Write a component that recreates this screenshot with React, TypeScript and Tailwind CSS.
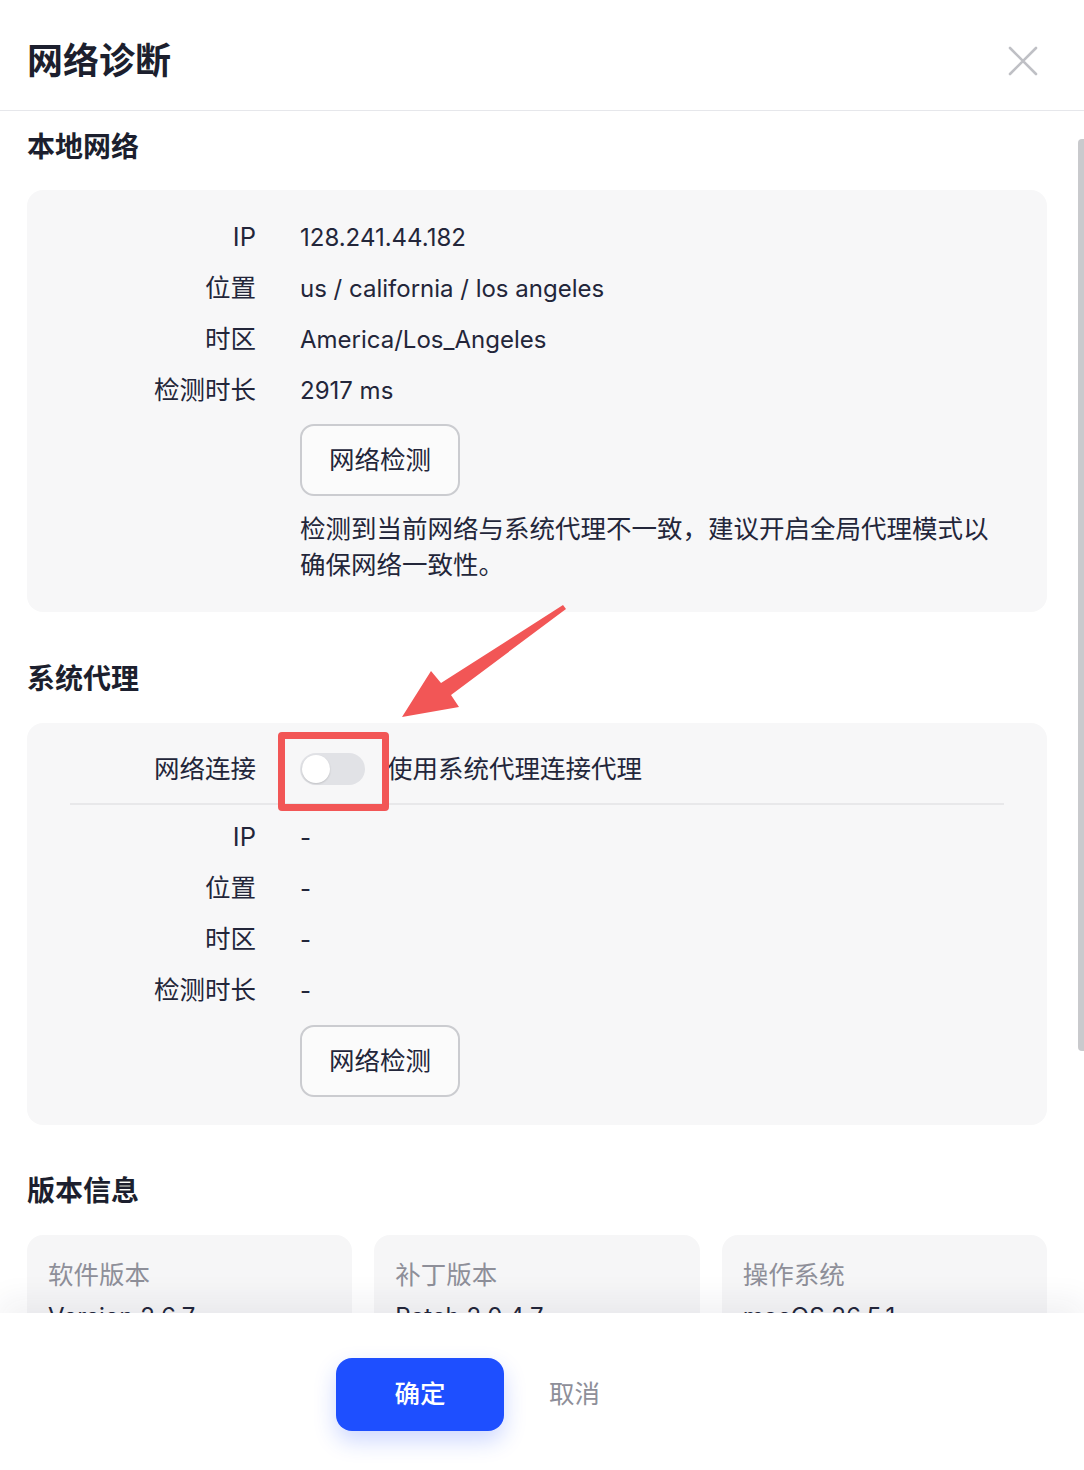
import React from 'react';

const rowsLocal = [
  { label: 'IP', value: '128.241.44.182' },
  { label: '位置', value: 'us / california / los angeles' },
  { label: '时区', value: 'America/Los_Angeles' },
  { label: '检测时长', value: '2917 ms' },
];

const rowsProxy = [
  { label: 'IP', value: '-' },
  { label: '位置', value: '-' },
  { label: '时区', value: '-' },
  { label: '检测时长', value: '-' },
];

const versions = [
  { label: '软件版本', value: 'Version 2.6.7' },
  { label: '补丁版本', value: 'Patch 2.0.4.7' },
  { label: '操作系统', value: 'macOS 26.5.1' },
];

function InfoRow({ label, value }: { label: string; value: string }) {
  return (
    <div className="flex h-[51px] items-center">
      <div className="w-[186px] text-right">{label}</div>
      <div className="ml-[44px] text-[24px]">{value}</div>
    </div>
  );
}

function CheckButton() {
  return (
    <button className="h-[72px] w-[160px] rounded-[14px] border-2 border-[#cbccd0] bg-[#fbfbfb] text-[25.5px] text-[#23263a]">
      网络检测
    </button>
  );
}

function SectionTitle({ children }: { children: React.ReactNode }) {
  return (
    <h2 className="flex h-[72px] items-center text-[28px] font-bold text-[#1c1f2e]">{children}</h2>
  );
}

export default function App() {
  return (
    <div className="relative flex h-[1470px] w-[1084px] flex-col overflow-hidden bg-white font-[Inter,'Noto_Sans_CJK_SC',sans-serif] text-[25.5px] text-[#23263a]">
      {/* header */}
      <header className="flex h-[111px] shrink-0 items-center justify-between border-b border-[#e6e7eb] pl-[27px] pr-[46px] pt-[12px]">
        <h1 className="text-[36px] font-bold leading-none text-[#1c1f2e]">网络诊断</h1>
        <svg width="30" height="30" viewBox="0 0 30 30" fill="none" stroke="#bfc0c5" strokeWidth="2.6" strokeLinecap="round">
          <path d="M2 2L28 28M28 2L2 28" />
        </svg>
      </header>

      {/* body */}
      <div className="flex-1 overflow-hidden pl-[27px] pr-[37px]">
        <SectionTitle>本地网络</SectionTitle>
        <div className="mt-[7px] rounded-[16px] bg-[#f7f7f8] pb-[29px] pl-[43px] pr-[43px] pt-[22px]">
          {rowsLocal.map((r) => (
            <InfoRow key={r.label} {...r} />
          ))}
          <div className="ml-[230px] mt-[8px]">
            <CheckButton />
            <p className="mt-[15px] leading-[36px]">
              检测到当前网络与系统代理不一致，建议开启全局代理模式以确保网络一致性。
            </p>
          </div>
        </div>

        <div className="mt-[31px]">
          <SectionTitle>系统代理</SectionTitle>
          <div className="mt-[8px] rounded-[16px] bg-[#f7f7f8] pb-[28px] pt-[20px]">
            <div className="mx-[43px] flex h-[62px] items-center border-b-2 border-[#e8e8ea] pb-[8px]">
              <div className="w-[186px] text-right">网络连接</div>
              <div className="ml-[44px] flex h-[32px] w-[65px] items-center rounded-full bg-[#e1e2e6] px-[2px]">
                <div className="h-[28px] w-[28px] rounded-full bg-white shadow-[0_1px_2px_rgba(0,0,0,0.15)]" />
              </div>
              <div className="ml-[22px]">使用系统代理连接代理</div>
            </div>
            <div className="mt-[7px] pl-[43px]">
              {rowsProxy.map((r) => (
                <InfoRow key={r.label} {...r} />
              ))}
              <div className="ml-[230px] mt-[9px]">
                <CheckButton />
              </div>
            </div>
          </div>
        </div>

        <div className="mt-[30px]">
          <SectionTitle>版本信息</SectionTitle>
          <div className="mt-[8px] grid grid-cols-3 gap-[22px]">
            {versions.map((v) => (
              <div key={v.label} className="h-[120px] rounded-[16px] bg-[#f6f6f7] pl-[21px] pt-[22px]">
                <div className="leading-[36px] text-[#8e8f99]">{v.label}</div>
                <div className="mt-[6px] text-[24px] leading-[36px]">{v.value}</div>
              </div>
            ))}
          </div>
        </div>
      </div>

      {/* footer */}
      <footer className="relative z-10 flex h-[157px] shrink-0 items-center bg-white pl-[336px] pt-[6px] shadow-[0_-14px_28px_rgba(40,40,60,0.06)]">
        <button className="h-[73px] w-[168px] rounded-[16px] bg-[#1e4fff] font-medium text-white shadow-[0_10px_22px_rgba(30,79,255,0.22)]">
          确定
        </button>
        <button className="ml-[45px] text-[#8e8f99]">取消</button>
      </footer>

      {/* scrollbar thumb */}
      <div className="absolute left-[1078px] top-[139px] h-[912px] w-[6px] rounded-l-[4px] bg-[#c9cacd]" />

      {/* annotation */}
      <div className="absolute left-[278px] top-[732px] h-[79px] w-[111px] rounded-[4px] border-[7px] border-[#f25656]" />
      <svg className="absolute left-0 top-0" width="1084" height="1470" viewBox="0 0 1084 1470">
        <polygon points="402,717 431,671 441,683 563,605 566,609 451,695 459,707" fill="#f25656" />
      </svg>
    </div>
  );
}
